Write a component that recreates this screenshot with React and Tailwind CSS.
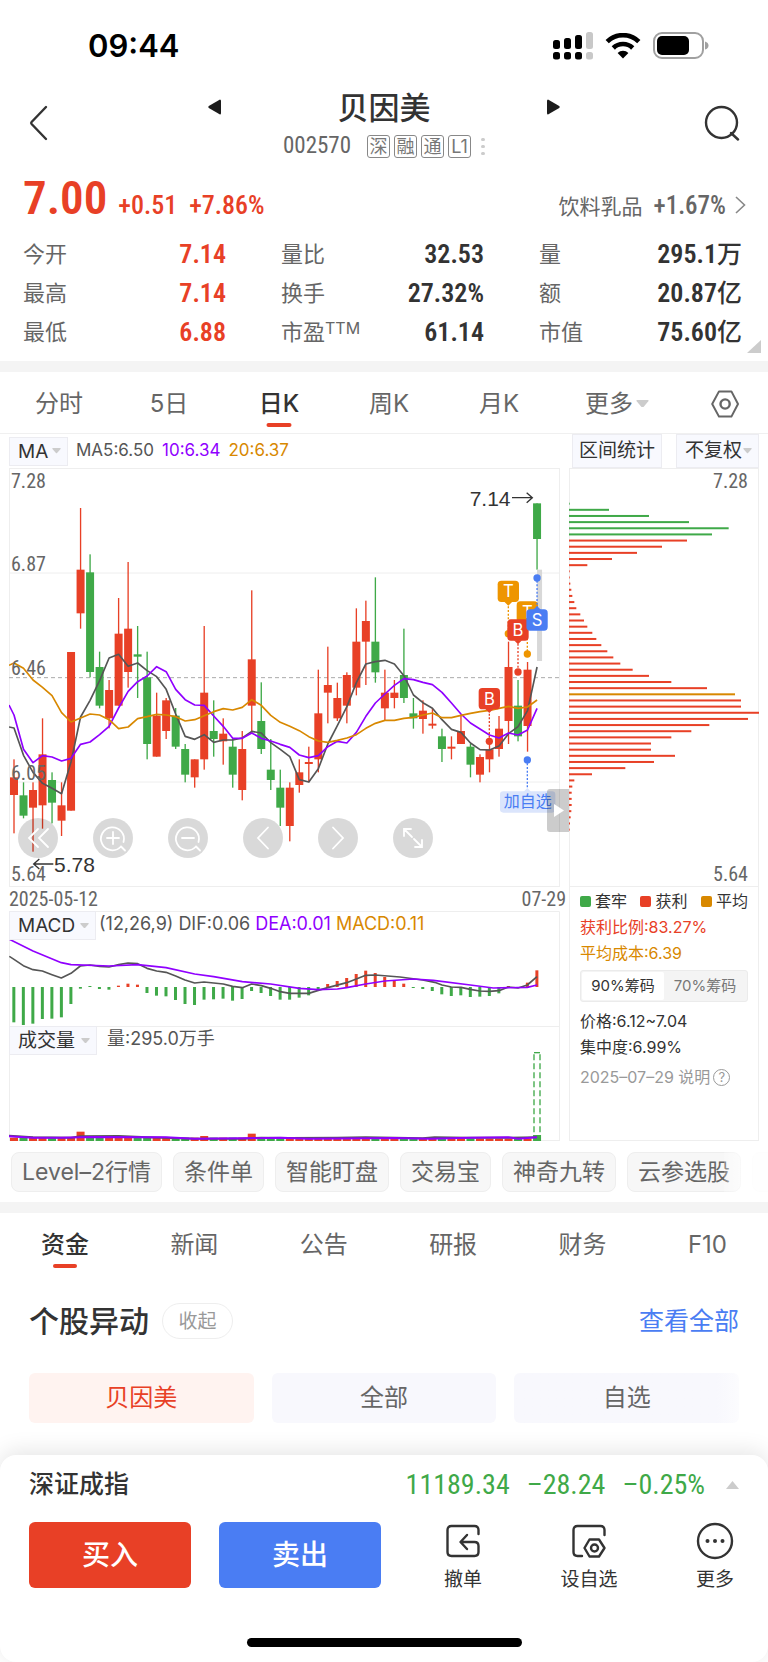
import React from 'react';

const SANS = "font-['Inter','Noto_Sans_CJK_SC',sans-serif]";
const DIN = "font-['Roboto_Condensed','Liberation_Sans_Narrow','Roboto','Noto_Sans_CJK_SC',sans-serif]";

const RED = '#e84026';
const GREEN = '#3fa948';
const AMBER = '#d88800';
const VIOLET = '#9000ff';
const GREY = '#555555';

/* Chart space uses three units per pixel; one trading day is 28.53 units wide. */
const dayX = (i) => 42 + 28.53 * i;

/* direction, high, body top, body bottom, low */
const CANDLES = [
  ['r', 898, 952, 1005, 1120], ['g', 967, 1006, 1067, 1075], ['r', 967, 990, 1043, 1175],
  ['r', 775, 883, 1036, 1106], ['g', 937, 960, 1028, 1090], ['r', 967, 1036, 1082, 1128],
  ['r', 576, 576, 1052, 1052], ['r', 144, 329, 460, 506], ['g', 283, 337, 636, 652],
  ['g', 575, 621, 737, 745], ['r', 660, 690, 775, 805], ['r', 414, 521, 737, 737],
  ['r', 306, 506, 636, 683], ['g', 498, 583, 590, 714], ['g', 575, 652, 852, 898],
  ['r', 698, 767, 890, 890], ['r', 714, 721, 813, 837], ['g', 744, 767, 860, 867],
  ['g', 852, 867, 944, 967], ['r', 898, 898, 952, 983], ['r', 498, 698, 898, 929],
  ['g', 721, 813, 837, 890], ['r', 775, 821, 844, 914], ['g', 837, 860, 944, 983],
  ['r', 813, 867, 990, 1021], ['r', 391, 598, 737, 821], ['g', 667, 783, 867, 882],
  ['g', 837, 929, 960, 990], ['g', 929, 983, 1043, 1098], ['r', 967, 983, 1098, 1144],
  ['r', 898, 937, 975, 998], ['r', 860, 906, 912, 967], ['r', 629, 760, 898, 937],
  ['r', 560, 675, 698, 790], ['r', 668, 714, 775, 783], ['r', 637, 645, 737, 790],
  ['r', 445, 545, 683, 706], ['r', 422, 483, 545, 675], ['g', 352, 545, 637, 668],
  ['r', 629, 698, 745, 783], ['r', 660, 698, 714, 745], ['g', 506, 645, 714, 729],
  ['g', 714, 760, 775, 806], ['r', 721, 752, 777, 821], ['r', 745, 791, 797, 806],
  ['g', 806, 829, 867, 906], ['r', 829, 860, 866, 898], ['r', 764, 813, 852, 852],
  ['g', 852, 860, 914, 952], ['r', 883, 891, 944, 967], ['r', 844, 868, 898, 937],
  ['r', 768, 806, 867, 890], ['r', 545, 621, 783, 852], ['g', 660, 737, 829, 844],
  ['r', 606, 629, 798, 875], ['g', 130, 130, 237, 329],
];

const MA5 = [804, 886, 937, 970, 985, 1001, 905, 771, 721, 662, 594, 583, 619, 609, 632, 650, 688, 762, 829, 838, 824, 847, 840, 840, 834, 814, 819, 848, 868, 890, 959, 966, 926, 852, 797, 740, 668, 612, 605, 601, 612, 647, 705, 728, 745, 779, 808, 817, 849, 869, 870, 858, 821, 800, 752, 621];
const MA10 = [765, 868, 908, 887, 891, 903, 895, 853, 846, 824, 799, 744, 694, 665, 648, 620, 635, 688, 719, 735, 736, 768, 799, 835, 835, 819, 835, 843, 853, 862, 885, 893, 887, 860, 844, 849, 817, 769, 729, 702, 676, 656, 659, 667, 674, 697, 729, 762, 789, 807, 825, 834, 819, 825, 810, 745];
const MA20 = [609, 625, 660, 682, 707, 758, 786, 774, 762, 765, 779, 806, 801, 776, 770, 763, 765, 770, 783, 779, 767, 755, 746, 750, 742, 719, 736, 766, 787, 799, 812, 830, 843, 847, 841, 834, 824, 805, 790, 781, 781, 775, 772, 765, 759, 773, 773, 766, 760, 755, 751, 745, 739, 745, 741, 720];

const MACD_BARS = [430, 438, 434, 420, 419, 415, 375, 329, 321, 330, 332, 320, 314, 317, 342, 350, 352, 363, 375, 378, 362, 361, 359, 365, 360, 336, 342, 351, 362, 362, 356, 349, 330, 315, 306, 297, 285, 275, 282, 294, 303, 314, 327, 330, 336, 346, 351, 349, 354, 353, 351, 343, 321, 326, 311, 274];
const DIF = '28,232 42,241 70,260 99,272 127,276 156,287 184,297 213,283 241,261 270,258 299,262 327,264 356,257 384,252 413,254 441,268 470,276 498,280 527,291 555,303 584,312 612,309 641,312 670,315 698,322 727,326 755,315 784,320 812,328 841,338 869,343 926,343 955,334 983,326 1040,311 1069,300 1097,289 1126,288 1200,294 1268,303 1304,310 1326,318 1354,324 1383,325 1411,331 1439,336 1468,337 1497,335 1525,324 1554,327 1582,318 1611,293';
const DEA = '28,181 99,216 184,251 213,257 327,261 413,257 498,266 584,285 641,293 727,308 812,315 898,328 955,332 1012,330 1040,326 1097,315 1155,306 1240,300 1300,304 1411,318 1480,327 1582,325 1611,318';

const CHIPS = [28, 146, 266, 386, 505, 455, 380, 305, 230, 155, 81, 28, 28, 30, 33, 36, 42, 48, 60, 71, 81, 96, 108, 123, 141, 159, 180, 217, 266, 333, 440, 524, 542, 542, 597, 563, 447, 393, 333, 272, 272, 344, 281, 195, 95, 42, 36, 34, 34, 34, 33, 31, 29, 28];

const line = (values, startY) =>
  `27,${startY} ` + values.map((y, i) => `${dayX(i).toFixed(1)},${y}`).join(' ');

function Caret({ className = 'w-[9px]' }) {
  return (
    <svg viewBox="0 0 10 6" className={className} aria-hidden="true">
      <path d="M.8 0H9.2Q10 .3 9.5 1L5.6 5.6Q5 6.2 4.4 5.6L.5 1Q0 .3 .8 0Z" fill="#cccccc" />
    </svg>
  );
}

function Picker({ label, value, className }) {
  return (
    <label className={`relative flex items-center border border-[#ececf1] bg-[#f8f9fe] ${className}`}>
      <select
        aria-label={label}
        defaultValue={value}
        className="h-full w-full appearance-none bg-transparent pl-2 text-[#333] outline-none"
      >
        <option>{value}</option>
      </select>
      <span className="pointer-events-none absolute right-[6px] flex">
        <Caret />
      </span>
    </label>
  );
}

function StatusBar() {
  return (
    <div className="flex h-[87px] items-center justify-between pt-1 pr-[58px] pl-[88px]">
      <span className="text-[31px] leading-none font-semibold text-black">09:44</span>
      <div className="flex items-center gap-3">
        <svg width="40" height="28" viewBox="0 0 40 28" aria-hidden="true">
          <g fill="#000">
            <rect x="0" y="8" width="7" height="9" rx="2.5" />
            <rect x="11" y="6" width="7" height="11" rx="2.5" />
            <rect x="22" y="3" width="7" height="14" rx="2.5" />
            <rect x="0" y="20" width="7" height="7.5" rx="2.5" />
            <rect x="11" y="20" width="7" height="7.5" rx="2.5" />
            <rect x="22" y="20" width="7" height="7.5" rx="2.5" />
          </g>
          <g fill="#c8c8c8">
            <rect x="33" y="0" width="7" height="17" rx="2.5" />
            <rect x="33" y="20" width="7" height="7.5" rx="2.5" />
          </g>
        </svg>
        <svg width="36" height="26" viewBox="0 0 36 26" fill="none" stroke="#000" aria-hidden="true">
          <path d="M2.2 8.6A22.5 22.5 0 0 1 33.8 8.6" strokeWidth="4.6" />
          <path d="M8.3 15A13.8 13.8 0 0 1 27.7 15" strokeWidth="4.6" />
          <path d="M18 25.6L12.6 20A7.8 7.8 0 0 1 23.4 20Z" fill="#000" stroke="none" />
        </svg>
        <svg width="57" height="27" viewBox="0 0 57 27" aria-hidden="true">
          <rect x="1" y="1" width="49" height="25" rx="8" fill="none" stroke="#a0a0a0" strokeWidth="2" />
          <rect x="4" y="4" width="32" height="19" rx="5" fill="#000" />
          <path d="M52 9.5Q55.5 10.5 55.5 13.5T52 17.5Z" fill="#a0a0a0" />
        </svg>
      </div>
    </div>
  );
}

function Header() {
  return (
    <header className="flex h-[71px] items-center justify-between pr-[28px] pl-[28px]">
      <button aria-label="返回" className="flex w-[36px]">
        <svg width="20" height="36" viewBox="0 0 20 36" fill="none" stroke="#333" strokeWidth="2.4" strokeLinecap="round" strokeLinejoin="round">
          <path d="M18 2L3.6 17Q2.7 18 3.6 19L18 34" />
        </svg>
      </button>
      <div className="w-[352px]">
        <div className="flex h-[40px] items-center justify-between">
          <button aria-label="上一只">
            <svg width="13" height="16" viewBox="0 0 13 16"><path d="M12 .5Q13 .5 13 2V14Q13 15.500 12 15.500L.8 9Q-.2 8 .8 7Z" fill="#1c1c1c" /></svg>
          </button>
          <h1 className="text-[31px] leading-none font-medium text-[#333]">贝因美</h1>
          <button aria-label="下一只">
            <svg width="13" height="16" viewBox="0 0 13 16"><path d="M1 .5Q0 .5 0 2V14Q0 15.500 1 15.500L12.200 9Q13.200 8 12.200 7Z" fill="#1c1c1c" /></svg>
          </button>
        </div>
        <div className="mt-2 flex h-[23px] items-center justify-center">
          <span className={`${DIN} mr-4 text-[23px] text-[#666]`}>002570</span>
          <span className="flex gap-[4px] text-[18px] text-[#777]">
            {['深', '融', '通', 'L1'].map((t) => (
              <span key={t} className="flex h-[23px] w-[23px] items-center justify-center rounded-[3px] border border-[#888] leading-none">{t}</span>
            ))}
          </span>
          <span className="ml-[10px] flex flex-col gap-1">
            <i className="h-[3px] w-[4px] rounded-full bg-[#ccc]" />
            <i className="h-[3px] w-[4px] rounded-full bg-[#ccc]" />
            <i className="h-[3px] w-[4px] rounded-full bg-[#ccc]" />
          </span>
        </div>
      </div>
      <button aria-label="搜索" className="flex w-[36px] justify-end">
        <svg width="36" height="36" viewBox="0 0 36 36" fill="none" stroke="#333" strokeWidth="2.400" strokeLinecap="round">
          <circle cx="17.500" cy="17.500" r="15.500" />
          <path d="M27 28L34 34.500" />
        </svg>
      </button>
    </header>
  );
}

const STATS = [
  ['今开', '7.14', true], ['量比', '32.53'], ['量', '295.1万'],
  ['最高', '7.14', true], ['换手', '27.32%'], ['额', '20.87亿'],
  ['最低', '6.88', true], ['市盈', '61.14'], ['市值', '75.60亿'],
];

function Quote() {
  return (
    <section className="relative pb-[10px] pl-[23px] pr-[26px]">
      <div className="flex h-[76px] items-baseline">
        <strong className={`${DIN} text-[47px] leading-[79px] font-semibold text-[#e84026]`}>7.00</strong>
        <span className={`${DIN} ml-[11px] text-[26px] font-medium text-[#e84026]`}>+0.51</span>
        <span className={`${DIN} ml-[12px] text-[26px] font-medium text-[#e84026]`}>+7.86%</span>
        <a href="#industry" className="ml-auto flex items-baseline text-[#666]">
          <span className="text-[21px]">饮料乳品</span>
          <span className={`${DIN} ml-[11px] text-[25px] font-medium`}>+1.67%</span>
          <svg className="ml-[9px] -mr-1" width="11" height="18" viewBox="0 0 11 18" fill="none" stroke="#888" strokeWidth="1.6"><path d="M1 1L9.500 9L1 17" /></svg>
        </a>
      </div>
      <dl className="grid grid-cols-3 gap-x-[55px]">
        {STATS.map(([label, value, up]) => (
          <div key={label} className="flex h-[39px] items-center justify-between leading-none">
            <dt className="flex text-[22px] text-[#666]">
              {label}
              {label === '市盈' && <sup className="top-0 -mt-px text-[16px] leading-none">TTM</sup>}
            </dt>
            <dd className={`${DIN} text-[26px] font-semibold ${up ? 'text-[#e84026]' : 'text-[#333]'}`}>
              {value.replace(/[万亿]/, '')}
              <span className="text-[25px] font-medium">{value.match(/[万亿]/)?.[0]}</span>
            </dd>
          </div>
        ))}
      </dl>
      <svg className="absolute right-[7px] bottom-[8px]" width="14" height="13" viewBox="0 0 14 13" aria-hidden="true"><path d="M14 0V13H0Z" fill="#ccc" /></svg>
    </section>
  );
}

function HexIcon({ size }) {
  return (
    <svg width={size} height={size} viewBox="0 0 28 28" fill="none" stroke="#666" strokeWidth="2" strokeLinejoin="round">
      <path d="M8 1.400H20.400L27 14L20.400 26.600H8L1.200 14Z" />
      <circle cx="14.100" cy="14" r="4.600" strokeWidth="2.400" />
    </svg>
  );
}

function PeriodTabs() {
  return (
    <nav className="flex h-[62px] items-center border-b border-[#f0f0f0] pt-[2px] pl-[4px] text-[24px] text-[#666]">
      <button className="flex-1">分时</button>
      <button className="flex-1">5日</button>
      <button aria-current="page" className="relative flex-1 font-medium text-[#333]">
        日K
        <i className="absolute -bottom-[5px] left-1/2 h-[4px] w-[25px] -translate-x-1/2 rounded-full bg-[#e84026]" />
      </button>
      <button className="flex-1">周K</button>
      <button className="flex-1">月K</button>
      <button className="flex flex-1 items-center justify-center">
        <span className="relative flex items-center">
          更多
          <span className="absolute left-full ml-[3px] flex"><Caret className="w-[13px]" /></span>
        </span>
      </button>
      <button aria-label="设置" className="flex w-[104px] justify-end pr-[29px]"><HexIcon size={28} /></button>
    </nav>
  );
}

function Marker({ x, y, letter, color }) {
  return (
    <g>
      <rect x={x - 32} y={y - 32} width="64" height="64" rx="11" fill={color} />
      <text x={x} y={y + 18} textAnchor="middle" fontSize="50" fill="#fff">{letter}</text>
    </g>
  );
}

function Stem({ x, y1, y2, color, dotY }) {
  return (
    <g>
      <line x1={x} x2={x} y1={y1} y2={y2} stroke={color} strokeWidth="4" strokeDasharray="6 5" />
      <circle cx={x} cy={dotY} r="11" fill={color} />
    </g>
  );
}

function CandleChart() {
  const last = dayX(55);
  return (
    <svg viewBox="27 24 1653 1257" className="block w-full" role="img" aria-label="日K线">
      <rect x="28.5" y="25.5" width="1650" height="1254" fill="none" stroke="#eee" strokeWidth="3" />
      <g stroke="#eee" strokeWidth="3">
        <line x1="27" x2="1680" y1="339" y2="339" />
        <line x1="27" x2="1680" y1="966" y2="966" />
      </g>
      <line x1="27" x2="1680" y1="653" y2="653" stroke="#aaa" strokeWidth="3" strokeDasharray="12 9" />
      {CANDLES.map(([dir, high, top, bottom, low], i) => {
        const color = dir === 'r' ? RED : GREEN;
        return (
          <g key={i} fill={color}>
            <rect x={dayX(i) - 2} y={high} width="4" height={low - high} />
            <rect x={dayX(i) - 12} y={top} width="24" height={bottom - top} />
          </g>
        );
      })}
      <g fill="none" strokeWidth="5" strokeLinejoin="round">
        <polyline points={line(MA5, 801)} stroke={GREY} />
        <polyline points={line(MA10, 735)} stroke={VIOLET} />
        <polyline points={line(MA20, 616)} stroke={AMBER} />
      </g>
      <g className={DIN} fontSize="60" fill="#666">
        <text x="33" y="83">7.28</text>
        <text x="33" y="332">6.87</text>
        <text x="33" y="646">6.46</text>
        <text x="33" y="959">6.05</text>
        <text x="33" y="1262">5.64</text>
      </g>
      <rect x={last} y="329" width="15" height="274" fill="#d8d8d8" />
      <g className={SANS}>
        <Stem x={1525} y1={428} y2={512} color="#ee9500" dotY={521} />
        <path d="M1513 425L1525 437L1537 425Z" fill="#ee9500" />
        <Marker x={1525} y={394} letter="T" color="#ee9500" />
        <Stem x={1582} y1={480} y2={574} color="#ee9500" dotY={582} />
        <Marker x={1582} y={456} letter="T" color="#ee9500" />
        <Stem x={1554} y1={540} y2={628} color={RED} dotY={636} />
        <path d="M1542 541L1554 553L1566 541Z" fill={RED} />
        <Marker x={1554} y={510} letter="B" color={RED} />
        <Stem x={last} y1={362} y2={448} color="#4a7df3" dotY={354} />
        <path d={`M${last - 12} 450L${last} 438L${last + 12} 450Z`} fill="#4a7df3" />
        <Marker x={last} y={480} letter="S" color="#4a7df3" />
        <Stem x={1468} y1={750} y2={836} color={RED} dotY={844} />
        <path d="M1456 747L1468 759L1480 747Z" fill={RED} />
        <Marker x={1468} y={716} letter="B" color={RED} />
        <Stem x={1582} y1={910} y2={984} color="#4a7df3" dotY={900} />
        <path d="M1570 996L1582 984L1594 996Z" fill="#dbe5fc" />
        <rect x="1500" y="994" width="166" height="64" rx="10" fill="#dbe5fc" />
        <text x="1583" y="1041" textAnchor="middle" fontSize="48" fill="#4a7df3">加自选</text>
      </g>
      <g className="font-['Liberation_Sans',sans-serif]" fill="#333" fontSize="63">
        <text x="1409" y="137">7.14</text>
        <text x="162" y="1236">5.78</text>
      </g>
      <g fill="none" stroke="#333" strokeWidth="4">
        <path d="M1536 113H1596M1580 98L1597 113L1580 128" />
        <path d="M160 1212H102M118 1197L101 1212L118 1227" />
      </g>
    </svg>
  );
}

const TOOLS = [
  ['最早', <path key="p" d="M20 11L11 20L20 29M30 11L21 20L30 29" />],
  ['放大', <g key="p"><path d="M28 28.500A11.500 11.500 0 1 1 30.500 24M28 28.500L32 32.500M20 14V26M14 20H26" /></g>],
  ['缩小', <g key="p"><path d="M28 28.500A11.500 11.500 0 1 1 30.500 24M28 28.500L32 32.500M14 20H26" /></g>],
  ['向前', <path key="p" d="M25 9.500L15 20L25 30.500" />],
  ['向后', <path key="p" d="M15 9.500L25 20L15 30.500" />],
  ['全屏', <path key="p" d="M11 18V11H18M11 11L19 19M29 22V29H22M29 29L21 21" />],
];

function PriceChart() {
  return (
    <div className="relative">
      <CandleChart />
      <div className="absolute bottom-[29px] left-[9px] flex gap-[35px]">
        {TOOLS.map(([label, icon]) => (
          <button key={label} aria-label={label} className="h-[40px] w-[40px] rounded-full bg-black/15">
            <svg viewBox="0 0 40 40" fill="none" stroke="#fff" strokeWidth="1.800" strokeLinecap="round">{icon}</svg>
          </button>
        ))}
      </div>
      <button aria-label="展开" className="absolute -right-[9px] bottom-[55px] flex h-[43px] w-[22px] items-center justify-center rounded-l-[3px] bg-black/20">
        <svg width="11" height="13" viewBox="0 0 11 13"><path d="M1 0L11 6.500L1 13Z" fill="#fff" /></svg>
      </button>
    </div>
  );
}

function MacdChart() {
  return (
    <svg viewBox="27 96 1653 345" className="block w-full" role="img" aria-label="MACD">
      <path d="M28.5 441V97.500H1678.500V441" fill="none" stroke="#eee" strokeWidth="3" />
      {MACD_BARS.map((y, i) => {
        const up = y < 324 && i !== 8;
        return <rect key={i} x={dayX(i) - 5} y={Math.min(y, 324)} width="9" height={Math.abs(y - 324)} fill={up ? RED : GREEN} />;
      })}
      <g fill="none" strokeWidth="5" strokeLinejoin="round">
        <polyline points={DIF} stroke={GREY} />
        <polyline points={DEA} stroke={VIOLET} />
      </g>
    </svg>
  );
}

const VOLUME_PEAKS = { 7: 756, 20: 769, 25: 762, 55: 766 };

function VolumeChart() {
  return (
    <svg viewBox="27 439 1653 345" className="block w-full" role="img" aria-label="成交量">
      <rect x="28.5" y="440.5" width="1650" height="342" fill="none" stroke="#eee" strokeWidth="3" />
      {CANDLES.map(([dir], i) => {
        const top = VOLUME_PEAKS[i] ?? (i > 25 ? 777 : 774);
        return <rect key={i} x={dayX(i) - 12} y={top} width="24" height={784 - top} fill={dir === 'r' ? RED : GREEN} />;
      })}
      <g fill="none" strokeWidth="6">
        <polyline points="27,768 99,773 213,774 241,770 356,769 441,773 584,777 727,777 784,774 869,775 1011,774 1097,773 1268,776 1304,773 1400,774 1525,774 1611,773" stroke={GREY} />
        <polyline points="27,770 99,774 184,774 270,772 498,773 584,777 727,776 841,774 926,777 1183,775 1290,777 1411,774 1525,773 1554,777 1611,773" stroke={VIOLET} />
      </g>
      <g stroke={GREEN} strokeWidth="4" strokeDasharray="18 9">
        <line x1="1602" x2="1602" y1="524" y2="766" />
        <line x1="1620" x2="1620" y1="524" y2="766" />
        <line x1="1602" x2="1620" y1="519" y2="519" />
      </g>
    </svg>
  );
}

function ChipChart() {
  return (
    <svg viewBox="26 24 570 1257" className="block w-full" role="img" aria-label="筹码分布">
      <rect x="27.5" y="25.5" width="567" height="1254" fill="none" stroke="#eee" strokeWidth="3" />
      {CHIPS.map((end, i) => (
        <rect key={i} x="26" y={128 + i * 18.45} width={end - 26} height="6" fill={i < 6 ? GREEN : i === 31 ? AMBER : RED} />
      ))}
      <g className={DIN} fontSize="60" fill="#666" textAnchor="end">
        <text x="563" y="84">7.28</text>
        <text x="563" y="1262">5.64</text>
      </g>
    </svg>
  );
}

function ChipPanel() {
  const legend = [['套牢', 'bg-[#3fa948]'], ['获利', 'bg-[#e84026]'], ['平均', 'bg-[#d88800]']];
  return (
    <div className="flex flex-col">
      <ChipChart />
      <div className="flex-1 border border-t-0 border-[#eee] px-[10px] pt-px text-[16px] leading-[26px] text-[#333]">
        <div className="flex justify-between">
          {legend.map(([name, bg]) => (
            <span key={name} className="flex items-center gap-1">
              <i className={`h-[11px] w-[11px] rounded-[2px] ${bg}`} />
              {name}
            </span>
          ))}
        </div>
        <p className="text-[#e84026]">获利比例:83.27%</p>
        <p className="text-[#d88800]">平均成本:6.39</p>
        <div className="mt-1 mb-[6px] flex h-[32px] rounded-[3px] border border-[#ebebeb] bg-[#f4f4f4] p-px text-[15px] whitespace-nowrap">
          <button aria-pressed="true" className="flex-1 rounded-[2px] bg-white">90%筹码</button>
          <button aria-pressed="false" className="flex-1 text-[#777]">70%筹码</button>
        </div>
        <p>价格:6.12~7.04</p>
        <p>集中度:6.99%</p>
        <p className="mt-[4px] flex items-center gap-[3px] whitespace-nowrap text-[#999]">
          2025–07–29 说明
          <button aria-label="帮助" className="flex h-[17px] w-[17px] shrink-0 items-center justify-center rounded-full border border-[#999] text-[13px] leading-none">?</button>
        </p>
      </div>
    </div>
  );
}

function Charts() {
  return (
    <section className="px-[9px]">
      <div className="grid grid-cols-[551fr_190fr] gap-x-[9px]">
        <div className="flex h-[34px] items-center text-[17px]">
          <Picker label="均线指标" value="MA" className="mr-2 h-[29px] w-[59px] text-[19px]" />
          <span className="text-[#555]">MA5:6.50</span>
          <span className="ml-2 text-[#9000ff]">10:6.34</span>
          <span className="ml-2 text-[#d88800]">20:6.37</span>
        </div>
        <div className="flex h-[34px] justify-between pl-[3px] text-[19px]">
          <button className="border border-[#ececf1] bg-[#f8f9fe] px-[6px] whitespace-nowrap text-[#333]">区间统计</button>
          <Picker label="复权方式" value="不复权" className="h-full w-[83px]" />
        </div>
        <div>
          <PriceChart />
          <div className={`${DIN} -mr-[6px] flex h-[24px] items-center justify-between text-[20px] text-[#666]`}>
            <span>2025-05-12</span>
            <span>07-29</span>
          </div>
          <div className="relative">
            <MacdChart />
            <div className="absolute top-0 left-0 flex items-start text-[18px] leading-[26px]">
              <Picker label="副图指标一" value="MACD" className="mr-[3px] h-[29px] w-[87px] text-[19px]" />
              <span className="text-[#555]">(12,26,9)</span>
              <span className="ml-[5px] text-[#555]">DIF:0.06</span>
              <span className="ml-[5px] text-[#9000ff]">DEA:0.01</span>
              <span className="ml-[5px] text-[#d88800]">MACD:0.11</span>
            </div>
          </div>
          <div className="relative">
            <VolumeChart />
            <div className="absolute top-0 left-0 flex items-start text-[18px] leading-[26px]">
              <Picker label="副图指标二" value="成交量" className="mr-[10px] h-[29px] w-[88px] text-[19px]" />
              <span className="text-[#555]">量:295.0万手</span>
            </div>
          </div>
        </div>
        <ChipPanel />
      </div>
    </section>
  );
}

function Shortcuts() {
  const items = ['Level–2行情', '条件单', '智能盯盘', '交易宝', '神奇九转', '云参选股'];
  return (
    <div className="relative overflow-hidden pt-[11px] pb-[10px] pl-[11px]">
      <div className="flex gap-[11px] text-[23px] whitespace-nowrap text-[#666]">
        {items.map((t) => (
          <button key={t} className="h-[40px] shrink-0 rounded-lg border border-[#eee] bg-[#f7f7f7] px-[10px] leading-none">{t}</button>
        ))}
        <button aria-label="更多工具" className="h-[40px] w-[91px] shrink-0 rounded-lg border border-[#eee] bg-[#f7f7f7]" />
      </div>
      <div className="pointer-events-none absolute inset-y-0 right-0 w-[44px] bg-linear-to-r from-white/20 to-white/90 to-60%" />
    </div>
  );
}

function ContentTabs() {
  return (
    <nav className="flex h-[64px] items-center justify-between px-[41px] text-[24px] text-[#666]">
      <button aria-current="page" className="relative font-medium text-[#333]">
        资金
        <i className="absolute -bottom-[5px] left-1/2 h-[4px] w-[24px] -translate-x-1/2 rounded-full bg-[#e84026]" />
      </button>
      {['新闻', '公告', '研报', '财务', 'F10'].map((t) => (
        <button key={t}>{t}</button>
      ))}
    </nav>
  );
}

function Movers() {
  return (
    <section className="px-[29px] pt-[26px]">
      <div className="flex h-[36px] items-center">
        <h2 className="text-[30px] leading-none font-medium text-[#333]">个股异动</h2>
        <button className="ml-[13px] h-[36px] w-[71px] rounded-full border border-[#eee] text-[19px] leading-none text-[#999]">收起</button>
        <a href="#all" className="ml-auto text-[25px] leading-none text-[#4a7df3]">查看全部</a>
      </div>
      <div className="mt-[34px] grid grid-cols-3 gap-[18px] text-[24px] text-[#666]">
        <button className="h-[50px] rounded-md bg-[#fff3f0] text-[#e84026]">贝因美</button>
        <button className="h-[50px] rounded-md bg-[#f8f8fd]">全部</button>
        <button className="h-[50px] rounded-md bg-linear-to-r from-[#f8f8fd] from-90% to-[#fcfcfe]">自选</button>
      </div>
    </section>
  );
}

function Action({ label, children }) {
  return (
    <button className="flex w-[64px] flex-col items-center gap-[6px] text-[19px] leading-[28px] whitespace-nowrap text-[#333]">
      <svg width="38" height="38" viewBox="0 0 38 38" fill="none" stroke="#333" strokeWidth="2.400" strokeLinecap="round" strokeLinejoin="round" aria-hidden="true">
        {children}
      </svg>
      {label}
    </button>
  );
}

function TradeBar() {
  return (
    <footer className="mt-[32px] rounded-[16px] bg-white px-[29px] pb-[15px] shadow-[0_-4px_22px_rgba(0,0,0,0.1)]">
      <div className="flex h-[60px] items-center">
        <span className="text-[25px] font-medium text-[#333]">深证成指</span>
        <span className={`${DIN} ml-auto flex gap-[17px] text-[28px] text-[#3fa948]`}>
          <span>11189.34</span>
          <span>–28.24</span>
          <span>–0.25%</span>
        </span>
        <svg className="ml-[21px]" width="13" height="8" viewBox="0 0 13 8" aria-hidden="true"><path d="M6.500 0L13 8H0Z" fill="#ccc" /></svg>
      </div>
      <div className="mt-[7px] flex h-[67px] items-start">
        <button className="h-[66px] w-[162px] rounded-md bg-[#e84026] text-[28px] font-medium text-white">买入</button>
        <button className="ml-[28px] h-[66px] w-[162px] rounded-md bg-[#4a7df3] text-[28px] font-medium text-white">卖出</button>
        <div className="-mr-[8px] ml-[50px] flex flex-1 justify-between">
          <Action label="撤单">
            <path d="M34.500 12V8Q34.500 4 30.500 4H7.500Q3.500 4 3.500 8V30Q3.500 34 7.500 34H30.500Q34.500 34 34.500 30V24Q34.500 20 30.500 20H17M23 13L16.500 20L23 27" />
          </Action>
          <Action label="设自选">
            <path d="M34.500 13V8Q34.500 4 30.500 4H7.500Q3.500 4 3.500 8V30Q3.500 34 7.500 34H12" />
            <path d="M19.500 17.500H29L34.500 26L29 34.500H19.500L14.500 26Z" />
            <circle cx="24.500" cy="26" r="3.500" />
          </Action>
          <Action label="更多">
            <circle cx="19" cy="19" r="17" />
            <g fill="#333" stroke="none">
              <circle cx="11.500" cy="19" r="2" />
              <circle cx="19" cy="19" r="2" />
              <circle cx="26.500" cy="19" r="2" />
            </g>
          </Action>
        </div>
      </div>
      <div className="mx-auto mt-[49px] h-[9px] w-[275px] rounded-full bg-black" />
    </footer>
  );
}

export default function App() {
  return (
    <main className={`${SANS} w-full overflow-hidden bg-white`}>
      <StatusBar />
      <Header />
      <Quote />
      <div className="h-[11px] bg-[#f4f4f4]" />
      <PeriodTabs />
      <Charts />
      <Shortcuts />
      <div className="h-[11px] bg-[#f4f4f4]" />
      <ContentTabs />
      <Movers />
      <TradeBar />
    </main>
  );
}
